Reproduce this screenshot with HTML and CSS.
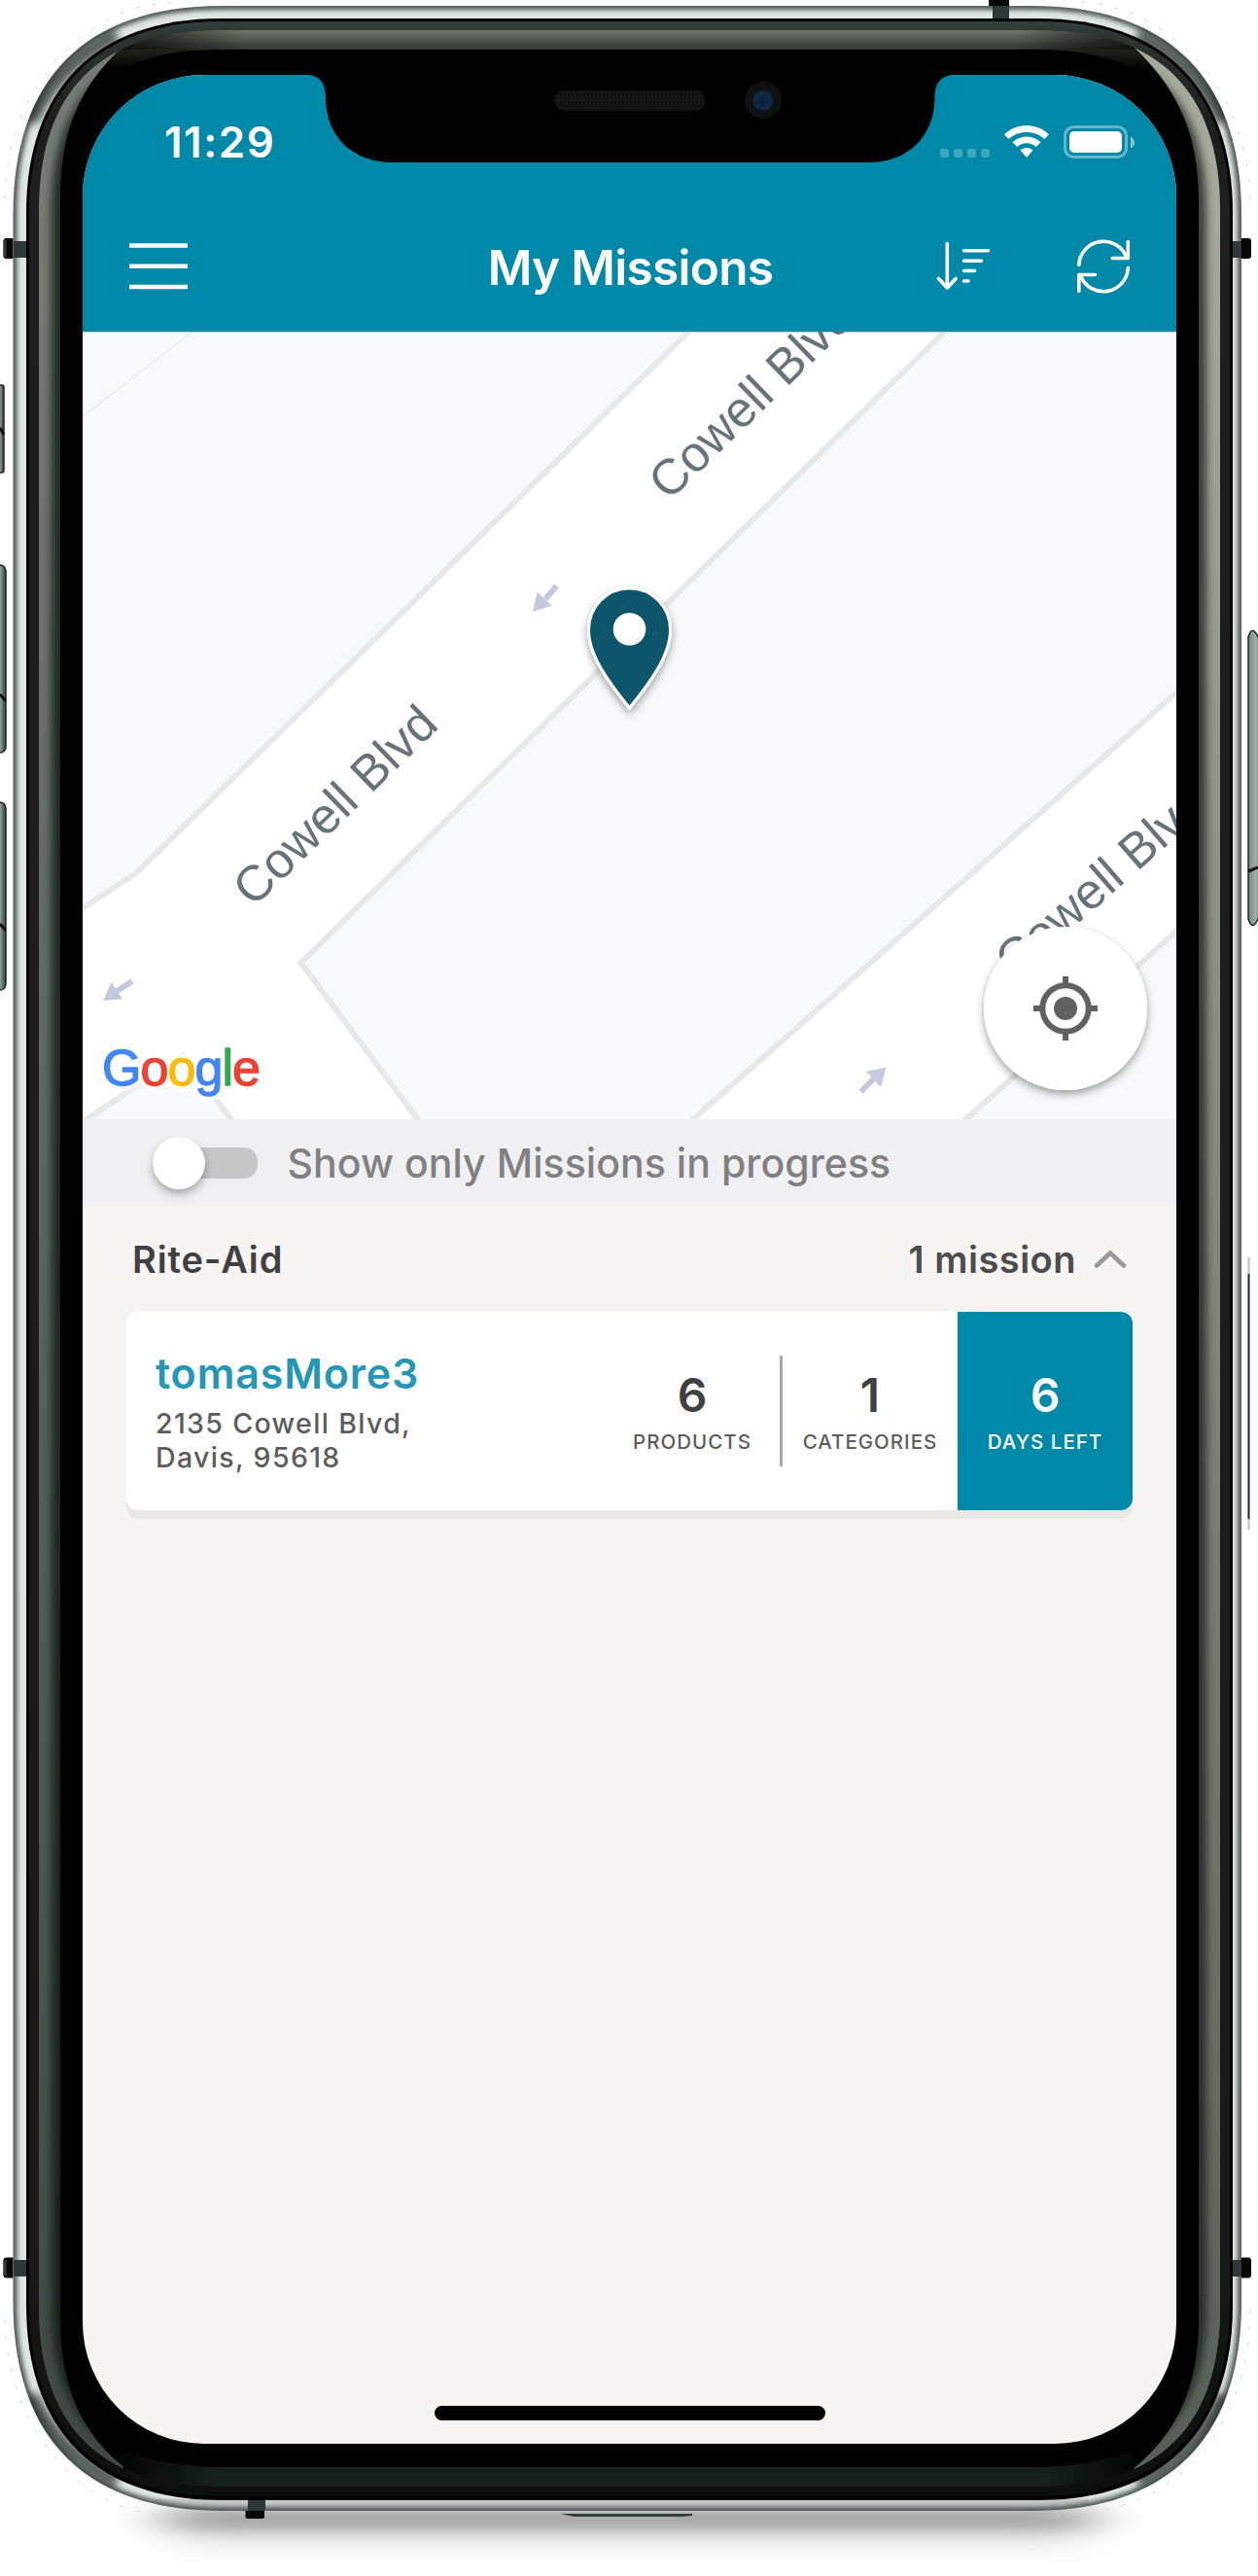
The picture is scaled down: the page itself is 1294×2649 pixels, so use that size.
FILE: index.html
```html
<!DOCTYPE html>
<html lang="en">
<head>
<meta charset="utf-8">
<title>My Missions</title>
<link rel="stylesheet" href="styles.css">
</head>
<body>
<div class="device">
  <svg class="frame" viewBox="0 0 1294 2649" aria-hidden="true">
    <defs>
      <linearGradient id="rim" gradientUnits="userSpaceOnUse" x1="0" y1="22" x2="0" y2="2567">
        <stop offset="0" stop-color="#33403d"/><stop offset=".006" stop-color="#2b3532"/><stop offset=".04" stop-color="#1c1f1e"/><stop offset=".9" stop-color="#161a19"/><stop offset="1" stop-color="#0b100f"/>
      </linearGradient>
      <linearGradient id="glowT" gradientUnits="userSpaceOnUse" x1="0" y1="31" x2="0" y2="51">
        <stop offset="0" stop-color="#72766d"/><stop offset="1" stop-color="#32342f"/>
      </linearGradient>
      <linearGradient id="fade" gradientUnits="userSpaceOnUse" x1="0" y1="200" x2="0" y2="2550">
        <stop offset="0" stop-color="#0c1412" stop-opacity="0"/><stop offset="1" stop-color="#0c1412" stop-opacity=".5"/>
      </linearGradient>
      <linearGradient id="cornerT" gradientUnits="userSpaceOnUse" x1="120" y1="0" x2="250" y2="0">
        <stop offset="0" stop-color="#000" stop-opacity=".75"/><stop offset="1" stop-color="#000" stop-opacity="0"/>
      </linearGradient>
      <linearGradient id="cornerTR" gradientUnits="userSpaceOnUse" x1="1175" y1="0" x2="1045" y2="0">
        <stop offset="0" stop-color="#000" stop-opacity=".75"/><stop offset="1" stop-color="#000" stop-opacity="0"/>
      </linearGradient>
      <linearGradient id="bandB" gradientUnits="userSpaceOnUse" x1="105" y1="0" x2="1190" y2="0">
        <stop offset="0" stop-color="#18201d" stop-opacity="0"/><stop offset=".11" stop-color="#18201d"/><stop offset=".89" stop-color="#18201d"/><stop offset="1" stop-color="#18201d" stop-opacity="0"/>
      </linearGradient>
      <linearGradient id="sink" gradientUnits="userSpaceOnUse" x1="0" y1="50" x2="0" y2="72">
        <stop offset="0" stop-color="#22241f"/><stop offset="1" stop-color="#000"/>
      </linearGradient>
      <linearGradient id="key" x1="0" y1="0" x2="1" y2="0">
        <stop offset="0" stop-color="#75847f"/><stop offset=".5" stop-color="#a3b1ac"/><stop offset="1" stop-color="#2d3834"/>
      </linearGradient>
      <filter id="soft" x="-20%" y="-200%" width="140%" height="500%"><feGaussianBlur stdDeviation="28 8"/></filter>
      <filter id="softer" x="-20%" y="-200%" width="140%" height="500%"><feGaussianBlur stdDeviation="34 16"/></filter>
      <filter id="blur3" filterUnits="userSpaceOnUse" x="0" y="0" width="1294" height="2649"><feGaussianBlur stdDeviation="2.500"/></filter>
      <filter id="blur5" filterUnits="userSpaceOnUse" x="0" y="0" width="1294" height="2649"><feGaussianBlur stdDeviation="4.500"/></filter>
      <path id="outer" d="M228 6H1062C1202 6 1277 81 1277 221V2367C1277 2507 1202 2582 1062 2582H228C88 2582 13.500 2507 13.500 2367V221C13.500 81 88 6 228 6Z"/>
      <path id="inner" d="M225 31H1070C1192 31 1255 94 1255 216V2372C1255 2494 1192 2557 1070 2557H225C103 2557 40 2494 40 2372V216C40 94 103 31 225 31Z"/>
      <clipPath id="shell"><use href="#outer"/></clipPath>
      <clipPath id="lip"><use href="#inner"/></clipPath>
      <clipPath id="left"><path d="M30 20H160L122 52C85 88 62 130 62 205V2385C62 2460 88 2505 126 2536L140 2570H30Z"/></clipPath>
      <clipPath id="right"><path d="M1265 20H1135L1168 50C1205 86 1233 130 1233 205V2385C1233 2460 1207 2505 1167 2538L1150 2570H1265Z"/></clipPath>
    </defs>

    <!-- ground shadow -->
    <rect x="170" y="2570" width="950" height="42" rx="21" fill="#000" opacity=".15" filter="url(#softer)"/>
    <rect x="170" y="2580" width="955" height="22" rx="11" fill="#000" opacity=".27" filter="url(#soft)"/>
    <path d="M577 2585H712V2587L700 2588H590Z" fill="#2f3c39"/>
    <path d="M5 205C6 90 90 2 180 3M1286 205C1284 90 1200 2 1100 1M5 2385C6 2490 80 2588 180 2587M1286 2375C1284 2500 1210 2588 1080 2587" fill="none" stroke="#d4d6d6" stroke-dasharray="4 13"/>

    <!-- side keys and antenna stubs -->
    <g stroke="#1f2926" stroke-width="1.5" fill="url(#key)">
      <rect x="-6" y="396" width="10" height="90" rx="2"/>
      <rect x="-8" y="581" width="14" height="193" rx="6"/>
      <rect x="-8" y="825" width="14" height="193" rx="6"/>
      <path d="M1284 655Q1288 642 1294 655H1300V945H1294Q1288 958 1284 945Z"/>
    </g>
    <path d="M0 440L4 447M0 714L6 721M0 950L6 957M1284 896L1294 892" stroke="#0c1311" stroke-width="3"/>
    <path d="M1284.500 1310V1562" stroke="#1c2422" stroke-width="2"/>
    <path d="M1284.500 1293V1310M1284.500 1562V1573" stroke="#bbb" stroke-width="2"/>
    <g fill="#050807">
      <rect x="3.500" y="245" width="14" height="21" rx="3"/><rect x="3.500" y="2321.500" width="14" height="21" rx="3"/>
      <rect x="1273" y="245" width="14" height="21" rx="3"/><rect x="1273" y="2321.500" width="14" height="21" rx="3"/>
      <rect x="1017" y="-4" width="21" height="14"/><rect x="252.500" y="2576" width="19.500" height="14" rx="2"/>
    </g>
    <path d="M5 247V264M5 2324V2340" stroke="#2c403a" stroke-width="3"/>

    <!-- steel band -->
    <g clip-path="url(#shell)">
      <rect x="13" y="6" width="1264" height="2576" fill="#dfe7e4"/>
      <rect x="160" y="2570" width="960" height="12" fill="#c3cac8"/>
      <use href="#outer" fill="none" stroke="#4b5552" stroke-width="8" filter="url(#blur3)"/>
      <path d="M32 125Q60 65 120 36M1258 125Q1230 65 1170 36M32 2463Q60 2523 120 2552M1258 2463Q1230 2523 1170 2552" fill="none" stroke="#1e2523" stroke-width="14" opacity=".75" filter="url(#blur5)"/>
      <g fill="#2c3936">
        <rect x="14" y="248" width="14" height="17"/><rect x="14" y="2324" width="14" height="17"/>
        <rect x="1267" y="248" width="10" height="17"/><rect x="1267" y="2324" width="10" height="17"/>
        <rect x="1021" y="6" width="17" height="14"/><rect x="255" y="2570" width="18" height="12"/>
      </g>
    </g>

    <!-- glass edge -->
    <path d="M227 19H1068C1196 19 1268 91 1268 219V2371C1268 2499 1196 2571 1068 2571H227C99 2571 27 2499 27 2371V219C27 91 99 19 227 19Z"/>
    <path d="M226 22H1069C1194 22 1265 93 1265 218V2371C1265 2496 1194 2567 1069 2567H226C101 2567 30 2496 30 2371V218C30 93 101 22 226 22Z" fill="url(#rim)"/>
    <use href="#inner" fill="#000"/>
    <g clip-path="url(#lip)">
      <path d="M227 51C175 51 145 60 118 76L100 31H1195L1176 76C1145 60 1117 51 1065 51Z" fill="url(#sink)"/>
      <path d="M60 31H1235V51H60Z" fill="url(#glowT)"/>
      <path d="M60 31H250V51H60Z" fill="url(#cornerT)"/>
      <path d="M1235 31H1045V51H1235Z" fill="url(#cornerTR)"/>
      <path d="M227 2537H1065Q1120 2537 1165 2520L1190 2560H100L125 2520Q175 2537 227 2537Z" fill="url(#bandB)"/>
      <g clip-path="url(#left)">
        <rect x="30" y="20" width="140" height="2550" fill="#222b28"/>
        <use href="#inner" fill="none" stroke="#757c73" stroke-width="26" filter="url(#blur5)"/>
        <rect x="30" y="20" width="140" height="2550" fill="url(#fade)"/>
      </g>
      <g clip-path="url(#right)">
        <rect x="1120" y="20" width="150" height="2550" fill="#3c3e38"/>
        <use href="#inner" fill="none" stroke="#a5aa9b" stroke-width="28" filter="url(#blur5)"/>
        <rect x="1120" y="20" width="150" height="2550" fill="url(#fade)"/>
      </g>
    </g>
  </svg>

  <main class="screen">
    <header class="header">
      <div class="status">
        <span class="time">11:29</span>
        <svg class="status-icons" viewBox="967 127 201 38" aria-hidden="true">
          <g fill="#fff" fill-opacity=".25">
            <rect x="967" y="153" width="9" height="9" rx="2.500"/><rect x="981" y="153" width="9" height="9" rx="2.500"/><rect x="995" y="153" width="9" height="9" rx="2.500"/><rect x="1009" y="153" width="9" height="9" rx="2.500"/>
          </g>
          <g fill="#fff">
            <path d="M1056 129C1065 129 1073 132.500 1079 138.300L1074.500 143C1069.500 138.500 1063 136 1056 136S1042.500 138.500 1037.500 143L1033 138.300C1039 132.500 1047 129 1056 129Z"/>
            <path d="M1056 140.500C1061.500 140.500 1066.600 142.600 1070.500 146.300L1065.900 151C1063.300 148.700 1059.900 147.300 1056 147.300S1048.700 148.700 1046.100 151L1041.500 146.300C1045.400 142.600 1050.500 140.500 1056 140.500Z"/>
            <path d="M1056 152C1058.500 152 1060.700 152.900 1062.500 154.500L1056 162L1049.500 154.500C1051.300 152.900 1053.500 152 1056 152Z"/>
            <rect x="1100" y="135" width="54" height="22" rx="5"/>
          </g>
          <rect x="1095.500" y="130.500" width="63" height="31" rx="9" fill="none" stroke="#fff" stroke-opacity=".4" stroke-width="3"/>
          <path d="M1163 140.500Q1167 142.500 1167 146.500T1163 152.500Z" fill="#fff" fill-opacity=".5"/>
        </svg>
      </div>
      <nav class="nav">
        <svg class="menu" viewBox="0 0 60 48" aria-hidden="true"><path d="M0 2.500H60M0 23.700H60M0 45H60" stroke="#fff" stroke-width="4.600"/></svg>
        <h1 class="title">My Missions</h1>
        <div class="actions">
          <svg class="sort" viewBox="963 246 58 54" fill="none" stroke="#fff" stroke-width="3.600" stroke-linecap="round" stroke-linejoin="round" aria-hidden="true"><path d="M974.300 249.500V295M965.500 285.500L974.300 295L983.100 285.500M991.500 256.700H1016.500M991.500 267.200H1009.500M991.500 277.500H1002.500M991.500 288H996"/></svg>
          <svg class="refresh" viewBox="1106 245 58 58" fill="none" stroke="#fff" stroke-width="3.600" stroke-linecap="round" stroke-linejoin="round" aria-hidden="true"><path d="M1109.800 272.500A25.300 25.300 0 0 1 1158.500 264M1160.300 248.500V265.500H1144.200M1160.300 275.500A25.300 25.300 0 0 1 1111.600 284M1109.800 299.500V282.500H1126.500"/></svg>
        </div>
      </nav>
    </header>

    <svg class="map" viewBox="85 341 1125 810">
      <defs>
        <filter id="drop" x="-30%" y="-30%" width="160%" height="160%"><feDropShadow dx="0" dy="4" stdDeviation="4.500" flood-color="#000" flood-opacity=".38"/></filter>
      </defs>
      <rect x="85" y="341" width="1125" height="810" fill="#fff"/>
      <g fill="#f8f9fb" stroke="#e8e8e8" stroke-width="6">
        <path d="M70 320H730L140 898L70 944Z"/>
        <path d="M1000 313L309.500 990L440 1165H697L1240 686V313Z"/>
        <path d="M980 1163L1230 940V1170Z"/>
        <path d="M68 1165L188.500 1085L248 1165Z"/>
      </g>
      <path d="M198 341L85 428.500" stroke="#dedede"/>
      <path d="M85 341.500H1210" stroke="#c9cdd0"/>
      <g fill="#c5c9de" stroke="#c5c9de">
        <path d="M548 628.700L552.600 608.500L568 623Z" stroke="none"/><path d="M561 616L572.500 602.500" stroke-width="6"/>
        <path d="M106 1029L114.700 1010L126 1027.500Z" stroke="none"/><path d="M120 1019.500L136 1009" stroke-width="6"/>
        <path d="M911.500 1097.700L891 1101.700L906 1118Z" stroke="none"/><path d="M898.500 1109.500L885.500 1122.500" stroke-width="6"/>
      </g>
      <g class="street">
        <text transform="translate(260.500 934) rotate(-44.100)">Cowell Blvd</text>
        <text transform="translate(688 516) rotate(-44.100)">Cowell Blvd</text>
        <text transform="translate(1043 1007.500) rotate(-41.200)">Cowell Blvd</text>
      </g>
      <text class="google" x="105" y="1115.500" textLength="163"><tspan class="blue">G</tspan><tspan class="red">o</tspan><tspan class="yellow">o</tspan><tspan class="blue">g</tspan><tspan class="green">l</tspan><tspan class="red">e</tspan></text>
      <path d="M647.500 605C671 605 689.500 624 689.500 648C689.500 674 668 703 647.500 728C627 703 605.500 674 605.500 648C605.500 624 624 605 647.500 605Z" fill="#0e546b" stroke="#fff" stroke-width="3" filter="url(#drop)"/>
      <circle cx="647.500" cy="647" r="16.800" fill="#fff"/>
      <circle cx="1096" cy="1037" r="84" fill="#fff" filter="url(#drop)"/>
      <g stroke="#616161" stroke-width="6" fill="none">
        <circle cx="1096" cy="1037" r="23.700"/>
        <path d="M1096 1004V1012M1096 1062V1070M1063 1037H1071M1121 1037H1129"/>
        <circle cx="1096" cy="1037" r="12" fill="#616161" stroke="none"/>
      </g>
    </svg>

    <section class="filter">
      <span class="toggle"><span class="thumb"></span></span>
      <span class="filter-label">Show only Missions in progress</span>
    </section>

    <section class="missions">
      <div class="group">
        <h2 class="store">Rite-Aid</h2>
        <span class="count">1 mission</span>
        <svg class="chevron" viewBox="0 0 34 20" aria-hidden="true"><path d="M3 16.500L17 3.500L31 16.500" fill="none" stroke="#999" stroke-width="4.600" stroke-linecap="round"/></svg>
      </div>
      <article class="card">
        <div class="info">
          <h3 class="name">tomasMore3</h3>
          <p class="address">2135 Cowell Blvd,<br>Davis, 95618</p>
        </div>
        <div class="stat products"><b class="num">6</b><span class="cap">PRODUCTS</span></div>
        <div class="divider"></div>
        <div class="stat categories"><b class="num">1</b><span class="cap">CATEGORIES</span></div>
        <div class="stat days"><b class="num">6</b><span class="cap">DAYS LEFT</span></div>
      </article>
    </section>
    <div class="home"></div>
  </main>

  <svg class="notch" viewBox="310 70 680 100" aria-hidden="true">
    <defs>
      <pattern id="mesh" width="4" height="4" patternUnits="userSpaceOnUse"><rect width="4" height="4" fill="#161616"/><rect width="2" height="2" fill="#0c0c0c"/></pattern>
      <radialGradient id="lens" cx=".45" cy=".55" r=".6"><stop offset="0" stop-color="#081a33"/><stop offset=".7" stop-color="#102c4e"/><stop offset="1" stop-color="#0a1626"/></radialGradient>
    </defs>
    <path d="M310 70V77H315C329 77 335 86 335 100C335 141 363 167 404 167H894C933 167 961.500 141 961.500 100C961.500 86 968 77 982 77H990V70Z"/>
    <rect x="570" y="93" width="155.500" height="21" rx="10.500" fill="url(#mesh)"/>
    <circle cx="785" cy="103" r="19" fill="#0f1111"/>
    <circle cx="785" cy="103" r="10.500" fill="url(#lens)"/>
  </svg>
</div>
</body>
</html>
```
FILE: styles.css
```css
* { box-sizing: border-box; }

body {
  margin: 0;
  background: #fff;
  font-family: Inter, "Liberation Sans", sans-serif;
}

.device {
  position: relative;
  width: 1294px;
  height: 2649px;
  padding: 77px 84px 0 85px;
  overflow: hidden;
}

.frame {
  position: absolute;
  inset: 0;
  width: 1294px;
  height: 2649px;
}

.notch {
  position: absolute;
  left: 310px;
  top: 70px;
  width: 680px;
  height: 100px;
}

.screen {
  position: relative;
  display: flex;
  flex-direction: column;
  width: 1125px;
  height: 2436px;
  border-radius: 125px;
  overflow: hidden;
  background: #f6f5f4;
}

.header {
  height: 264px;
  background: #0088a9;
  color: #fff;
}

.status {
  display: flex;
  align-items: center;
  justify-content: space-between;
  height: 138px;
  padding: 0 42px 0 84px;
}

.time {
  font-size: 44px;
  font-weight: 600;
  line-height: 50px;
  letter-spacing: 1.5px;
}

.status-icons {
  width: 201px;
  height: 38px;
}

.nav {
  display: grid;
  grid-template-columns: 1fr auto 1fr;
  align-items: center;
  height: 118px;
  padding: 0 46px 0 48px;
}

.menu {
  width: 60px;
  height: 48px;
}

.title {
  margin: 2px 0 0;
  font-size: 49.5px;
  font-weight: 600;
  line-height: 60px;
  letter-spacing: -0.7px;
}

.actions {
  display: flex;
  justify-content: flex-end;
  align-items: center;
  gap: 85px;
}

.sort { width: 58px; height: 54px; }
.refresh { width: 58px; height: 58px; }

.map {
  display: block;
  flex: none;
  width: 1125px;
  height: 810px;
}

.street {
  font: 51.3px "Liberation Sans", sans-serif;
  fill: #66747a;
}

.google {
  font: 52px "Liberation Sans", sans-serif;
  stroke-width: 1.3px;
  filter: drop-shadow(0 0 3px #fff) drop-shadow(0 0 3px #fff) drop-shadow(0 0 2px #fff);
}

.blue { fill: #4285f4; stroke: #4285f4; }
.red { fill: #ea4335; stroke: #ea4335; }
.yellow { fill: #fbbc05; stroke: #fbbc05; }
.green { fill: #34a853; stroke: #34a853; }

.filter {
  display: flex;
  align-items: center;
  height: 90px;
  padding-left: 72px;
  gap: 30.5px;
  background: #f0f0f3;
}

.toggle {
  display: flex;
  align-items: center;
  width: 108px;
  height: 32px;
  border-radius: 14px;
  background: #c6c6c6;
}

.thumb {
  width: 54px;
  height: 54px;
  border-radius: 50%;
  background: #fff;
  box-shadow: 0 5px 9px rgba(0, 0, 0, .3);
}

.filter-label {
  color: #808080;
  font-size: 41px;
  font-weight: 500;
  letter-spacing: .05px;
}

.missions {
  display: flex;
  flex-direction: column;
  padding: 0 45px;
}

.group {
  display: flex;
  align-items: center;
  height: 108px;
  padding: 0 6px 0 6px;
  color: #404040;
  font-size: 38px;
  font-weight: 600;
}

.store {
  flex: 1;
  margin: 0;
  font-size: inherit;
  font-weight: inherit;
  letter-spacing: .9px;
}

.count {
  color: #4c4c4c;
  letter-spacing: .5px;
}

.chevron {
  width: 34px;
  height: 20px;
  margin-left: 18px;
}

.card {
  display: flex;
  height: 204px;
  border-radius: 12px;
  background: #fff;
  box-shadow: 0 9px 0 #e9e8e6;
  overflow: hidden;
}

.info {
  flex: 1;
  padding: 36px 0 0 30px;
}

.name {
  margin: 0;
  color: #2596b3;
  font-size: 43px;
  font-weight: 600;
  line-height: 54px;
  letter-spacing: .85px;
}

.address {
  margin: 7px 0 0;
  color: #5c5c5c;
  font-size: 28.5px;
  font-weight: 500;
  line-height: 35px;
  letter-spacing: 1.35px;
}

.stat {
  display: flex;
  flex-direction: column;
  align-items: center;
  width: 180px;
  padding-top: 58px;
}

.num {
  color: #404040;
  font-size: 48px;
  font-weight: 600;
  line-height: 56px;
}

.cap {
  margin-top: 7px;
  color: #5c5c5c;
  font-size: 20.5px;
  font-weight: 500;
  line-height: 26px;
  letter-spacing: 1px;
}

.divider {
  align-self: center;
  width: 3px;
  height: 114px;
  background: #a9a9a9;
}

.days { background: #0088a9; }
.days .num, .days .cap { color: #fff; }

.home {
  width: 402px;
  height: 15px;
  margin: auto auto 24px 362px;
  border-radius: 8px;
  background: #000;
}
```
